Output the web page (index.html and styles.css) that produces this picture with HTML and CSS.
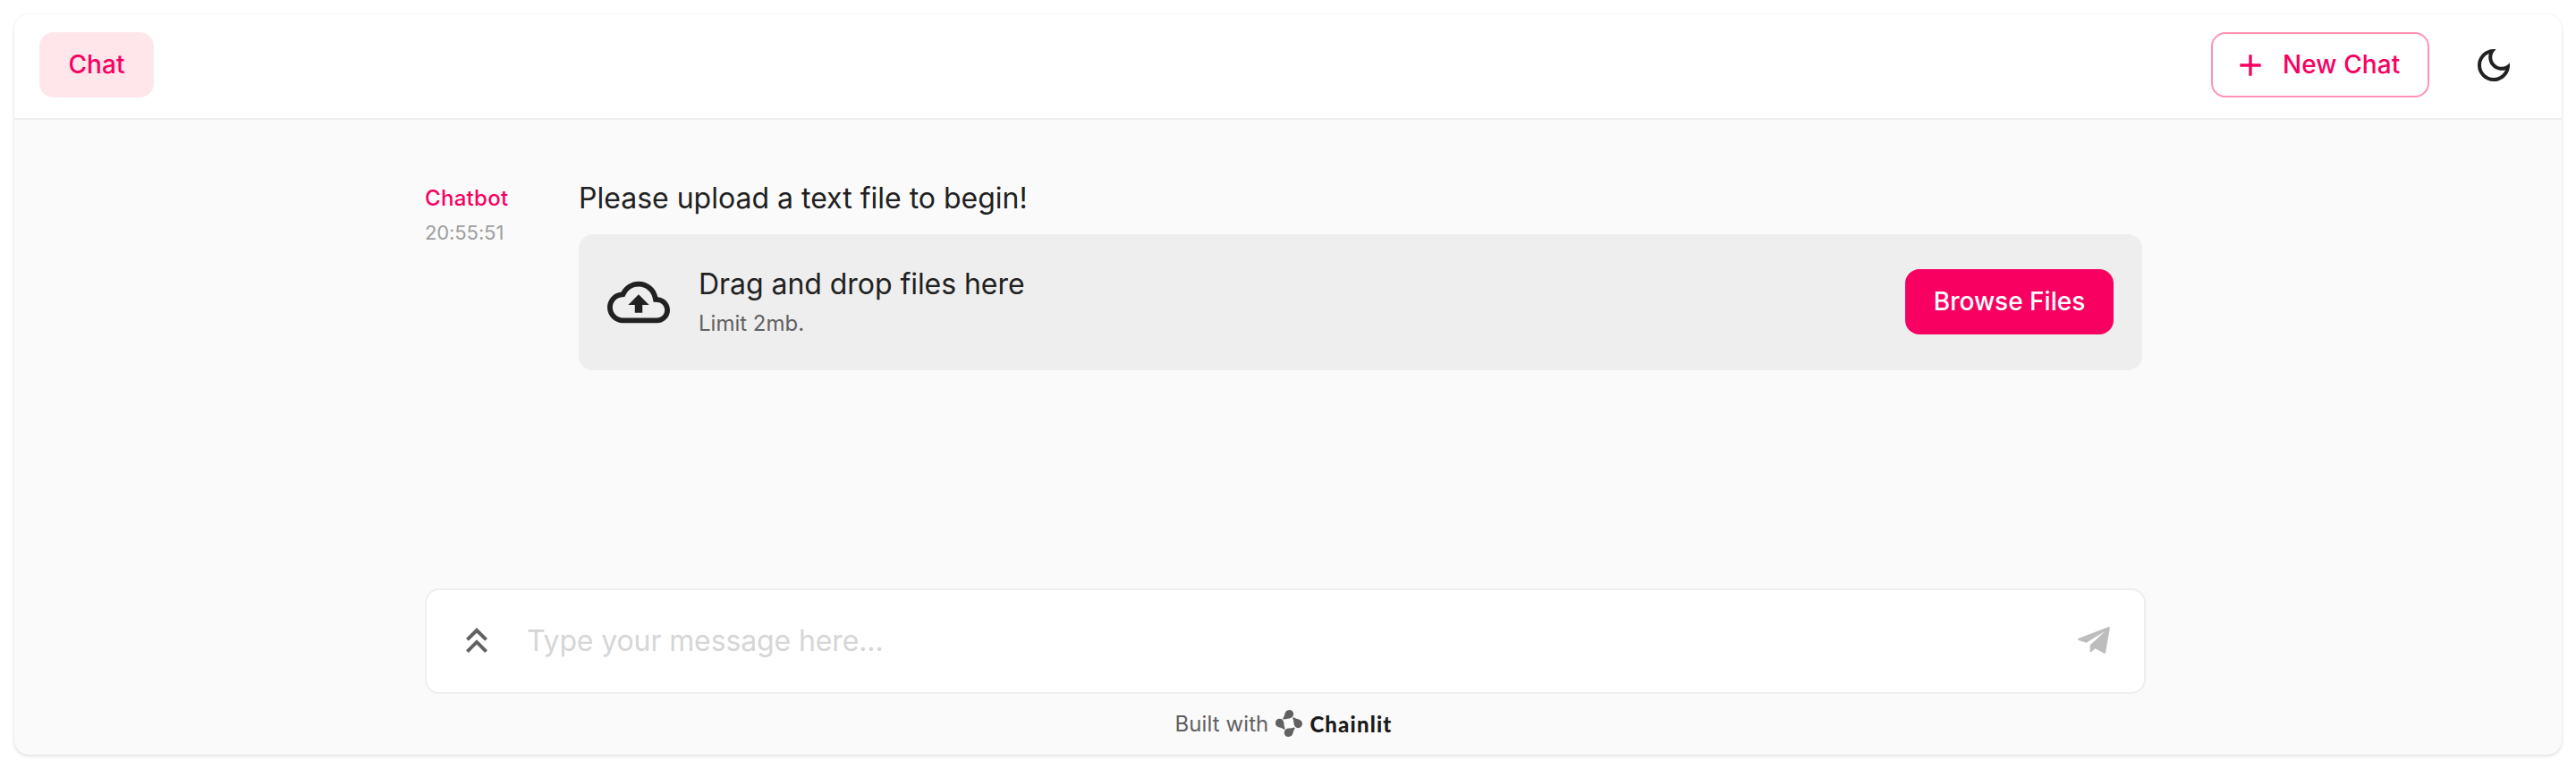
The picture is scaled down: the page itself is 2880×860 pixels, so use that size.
FILE: index.html
```html
<!DOCTYPE html>
<html lang="en">
<head>
<meta charset="utf-8">
<title>Chatbot</title>
<link rel="stylesheet" href="styles.css">
</head>
<body>
<div class="app">
  <header class="header">
    <button class="tab">Chat</button>
    <div class="actions">
      <button class="new-chat">
        <svg class="plus" viewBox="0 0 24 24"><path d="M19 13h-6v6h-2v-6H5v-2h6V5h2v6h6v2z"/></svg>
        <span class="new-chat-label">New Chat</span>
      </button>
      <svg class="moon" viewBox="0 0 24 24"><path d="M9.37 5.51c-.18.64-.27 1.31-.27 1.99 0 4.08 3.32 7.4 7.4 7.4.68 0 1.35-.09 1.99-.27C17.45 17.19 14.93 19 12 19c-3.86 0-7-3.14-7-7 0-2.93 1.81-5.45 4.37-6.49zM12 3c-4.97 0-9 4.03-9 9s4.03 9 9 9 9-4.03 9-9c0-.46-.04-.92-.1-1.36-.98 1.37-2.58 2.26-4.4 2.26-2.98 0-5.4-2.42-5.4-5.4 0-1.81.89-3.42 2.26-4.4C12.92 3.04 12.46 3 12 3z"/></svg>
    </div>
  </header>
  <main class="main">
    <section class="message">
      <div class="meta">
        <span class="author">Chatbot</span>
        <span class="time">20:55:51</span>
      </div>
      <div class="content">
        <p class="text">Please upload a text file to begin!</p>
        <div class="dropzone">
          <svg class="cloud" viewBox="0 0 24 24"><path d="M19.35 10.04C18.67 6.59 15.64 4 12 4 9.11 4 6.6 5.64 5.35 8.04 2.34 8.36 0 10.91 0 14c0 3.31 2.69 6 6 6h13c2.76 0 5-2.24 5-5 0-2.64-2.05-4.78-4.65-4.96zM19 18H6c-2.21 0-4-1.79-4-4 0-2.05 1.53-3.76 3.56-3.97l1.07-.11.5-.95C8.08 7.14 9.94 6 12 6c2.62 0 4.88 1.86 5.39 4.43l.3 1.5 1.53.11c1.56.1 2.78 1.41 2.78 2.96 0 1.65-1.35 3-3 3zM8 13h2.55v3h2.9v-3H16l-4-4z"/></svg>
          <div class="drop-copy">
            <span class="drop-title">Drag and drop files here</span>
            <span class="drop-limit">Limit 2mb.</span>
          </div>
          <button class="browse">Browse Files</button>
        </div>
      </div>
    </section>
    <div class="composer">
      <svg class="expand" viewBox="0 0 24 24"><path d="M6 17.59 7.41 19 12 14.42 16.59 19 18 17.59l-6-6z"/><path d="m6 11 1.41 1.41L12 7.83l4.59 4.58L18 11l-6-6z"/></svg>
      <span class="placeholder">Type your message here...</span>
      <svg class="send" viewBox="0 0 36 30"><path d="M.6 13 34.6.1Q36 0 35.8 1.500L31 29Q30.600 30.300 29.500 29.800L19.500 24.200 15 28.200Q13.700 29 13.700 27.400V20.500L30.500 5 9.500 17.700.8 14.900Q-.5 14 .6 13z"/></svg>
    </div>
    <footer class="footer">
      <span class="built">Built with</span>
      <svg class="logo" viewBox="-15 -15 30 30">
        <path id="petal" d="M-6.200-6.400C-4.900-8.400-4.900-10-4.100-12C-3.200-14.200-1.400-15 .6-15C3.200-15 5.200-13 5.200-10.400C5.200-7.600 3.300-5.900.6-5.600C-2-5.400-3.800-5-5.400-4.400Q-7.600-4.200-6.200-6.400Z"/>
        <use href="#petal" transform="rotate(90)"/>
        <use href="#petal" transform="rotate(180)"/>
        <use href="#petal" transform="rotate(270)"/>
      </svg>
      <span class="brand">Chainlit</span>
    </footer>
  </main>
</div>
</body>
</html>
```
FILE: styles.css
```css
* { box-sizing: border-box; }
body { margin: 0; padding: 16px; background: #fff; font-family: Inter, "Liberation Sans", sans-serif; color: #212121; }
button { font: inherit; border: 0; margin: 0; padding: 0; }
svg { display: block; flex: none; }
span { white-space: nowrap; }
.app { height: 828px; display: flex; flex-direction: column; border-radius: 16px; overflow: hidden; background: #fafafa; box-shadow: 0 2px 4px rgba(0,0,0,.1), 0 0 2px rgba(0,0,0,.1); }
.header { height: 118px; flex: none; display: flex; justify-content: space-between; align-items: flex-start; padding: 20px 52px 0 28px; background: #fff; border-bottom: 2px solid #eee; }
.tab, .new-chat, .browse { height: 73px; border-radius: 16px; font-size: 28px; font-weight: 500; line-height: 49px; letter-spacing: .1px; }
.tab { width: 128px; background: #ffe6eb; color: #f80061; }
.actions { display: flex; align-items: center; gap: 48px; }
.new-chat { width: 244px; display: flex; align-items: center; gap: 16px; padding-left: 22px; background: #fff; border: 2px solid #ff91b2; color: #f80061; }
.plus { width: 40px; height: 40px; fill: #f80061; }
.moon { width: 48px; height: 48px; fill: #212121; }
.main { flex: 1; display: flex; flex-direction: column; width: 1924px; margin-left: 459px; padding-top: 64px; }
.message { display: flex; padding-right: 4px; }
.meta { width: 172px; flex: none; display: flex; flex-direction: column; padding-top: 5px; }
.author { font-size: 24px; font-weight: 500; line-height: 38px; letter-spacing: .3px; color: #f80061; }
.time { font-size: 22px; line-height: 39px; letter-spacing: -.1px; color: #9e9e9e; }
.content { flex: 1; }
.text { margin: 0; font-size: 32px; line-height: 48px; }
.dropzone { margin-top: 16px; height: 152px; border-radius: 16px; background: #eee; display: flex; align-items: center; padding: 0 32px; }
.cloud { width: 70px; height: 70px; fill: #212121; }
.drop-copy { flex: 1; display: flex; flex-direction: column; padding-left: 32px; }
.drop-title { font-size: 32px; line-height: 48px; letter-spacing: -.05px; }
.drop-limit { font-size: 24px; line-height: 40px; color: #616161; }
.browse { width: 233px; margin-bottom: 1px; letter-spacing: 0; background: #f80061; color: #fff; }
.composer { margin-top: auto; height: 118px; background: #fff; border: 2px solid #eee; border-radius: 16px; display: flex; align-items: center; padding: 0 38px 2px 32px; }
.expand { width: 48px; height: 48px; fill: #616161; }
.placeholder { flex: 1; padding-left: 32px; font-size: 32px; letter-spacing: -.12px; color: #d6d6d6; }
.send { width: 36px; height: 30px; fill: #bdbdbd; }
.footer { height: 68px; display: flex; align-items: center; justify-content: center; padding: 0 4px 2px 0; }
.built { font-size: 24px; letter-spacing: .1px; color: #616161; }
.logo { width: 30px; height: 30px; margin: 0 8px; fill: #616161; }
.brand { font-family: Lato, sans-serif; font-weight: 900; font-size: 24px; letter-spacing: 1.15px; color: #1a1a1a; }
```
